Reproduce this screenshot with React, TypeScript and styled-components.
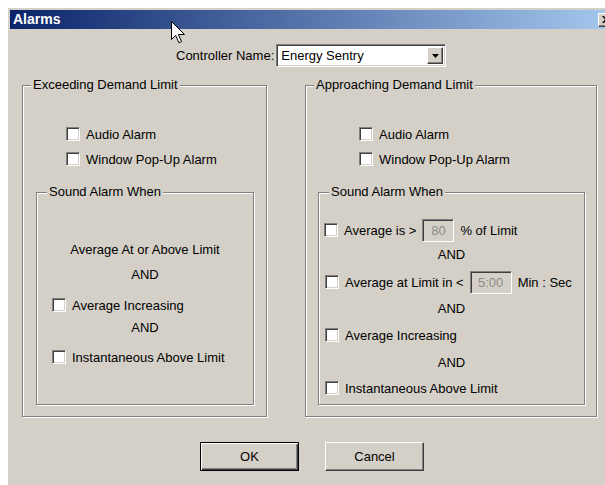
import styled, { createGlobalStyle, css } from "styled-components";

const GlobalStyle = createGlobalStyle`
  body {
    margin: 0;
    background: #fff;
    overflow: hidden;
    font-family: "Liberation Sans", Arial, sans-serif;
    font-size: 13px;
    color: #000;
  }
`;

const face = "#d4d0c8";

const sunken = css`
  box-sizing: border-box;
  border: 1px solid;
  border-color: #808080 #fff #fff #808080;
  box-shadow: inset 1px 1px 0 #404040, inset -1px -1px 0 ${face};
`;

const raised = css`
  box-sizing: border-box;
  border: 1px solid;
  border-color: #fff #404040 #404040 #fff;
  box-shadow: inset -1px -1px 0 #808080;
`;

const Window = styled.div`
  position: relative;
  box-sizing: border-box;
  width: 612px;
  height: 480px;
  margin: 8px 0 0 7px;
  padding: 1px 0 0 2px;
  border-left: 1px solid #fff;
  border-top: 1px solid ${face};
  background: ${face};
`;

const TitleBar = styled.div`
  display: flex;
  align-items: center;
  justify-content: space-between;
  height: 19px;
  padding: 0 5px 0 3px;
  background: linear-gradient(to right, #0a246a, #a6caf0);
`;

const TitleText = styled.span`
  color: #fff;
  font-weight: bold;
  font-size: 14px;
  line-height: 19px;
`;

const CloseButton = styled.div`
  ${raised};
  width: 16px;
  height: 14px;
  background: ${face};
  display: flex;
  align-items: center;
  justify-content: center;
`;

const Body = styled.div`
  padding: 15px 0 0 12px;
`;

const ControllerRow = styled.div`
  display: flex;
  align-items: center;
  margin-left: 154px;
  height: 23px;
`;

const Label = styled.span`
  margin-right: 2px;
  white-space: nowrap;
`;

const Select = styled.div`
  ${sunken};
  width: 170px;
  height: 23px;
  background: #fff;
  display: flex;
  align-items: center;
  justify-content: space-between;
  padding: 2px 2px 2px 4px;
`;

const DropButton = styled.div`
  ${raised};
  width: 16px;
  height: 17px;
  background: ${face};
  display: flex;
  align-items: center;
  justify-content: center;
`;

const GroupsRow = styled.div`
  display: flex;
  gap: 38px;
  margin-top: 18px;
`;

const GroupBox = styled.div<{ $w: number; $h: number; $left?: number; $top?: number }>`
  position: relative;
  box-sizing: border-box;
  width: ${(p) => p.$w}px;
  height: ${(p) => p.$h}px;
  margin-left: ${(p) => p.$left ?? 0}px;
  margin-top: ${(p) => p.$top ?? 0}px;
  border: 1px solid #808080;
  box-shadow: inset 1px 1px 0 #fff, 1px 1px 0 #fff;
  display: flex;
  flex-direction: column;
`;

const Legend = styled.span<{ $indent: number }>`
  position: absolute;
  top: -9px;
  left: ${(p) => p.$indent}px;
  padding: 0 2px;
  line-height: 16px;
  background: ${face};
  white-space: nowrap;
`;

const AlarmList = styled.div<{ $left: number }>`
  display: flex;
  flex-direction: column;
  gap: 11px;
  margin: 41px 0 0 ${(p) => p.$left}px;
`;

const CheckRow = styled.div<{ $top?: number; $left?: number; $tall?: boolean }>`
  display: flex;
  align-items: center;
  height: ${(p) => (p.$tall ? 24 : 14)}px;
  margin-top: ${(p) => p.$top ?? 0}px;
  margin-left: ${(p) => p.$left ?? 0}px;
  white-space: nowrap;
`;

const CheckBox = styled.span`
  ${sunken};
  flex: none;
  width: 14px;
  height: 14px;
  background: #fff;
  margin-right: 6px;
`;

const Caption = styled.div<{ $top: number }>`
  margin-top: ${(p) => p.$top}px;
  line-height: 16px;
  text-align: center;
`;

const SpinField = styled.div<{ $w: number }>`
  ${sunken};
  width: ${(p) => p.$w}px;
  height: 23px;
  margin: 0 6px;
  background: ${face};
  color: #8c8a86;
  display: flex;
  align-items: center;
  justify-content: center;
`;

const ButtonRow = styled.div`
  display: flex;
  gap: 26px;
  margin: 25px 0 0 178px;
`;

const Button = styled.div<{ $default?: boolean }>`
  width: 99px;
  height: 29px;
  display: flex;
  align-items: center;
  justify-content: center;
  background: ${face};
  ${(p) =>
    p.$default
      ? css`
          box-sizing: border-box;
          border: 1px solid #000;
          box-shadow: inset 1px 1px 0 #fff, inset -1px -1px 0 #404040,
            inset -2px -2px 0 #808080;
        `
      : raised};
`;

const Pointer = styled.svg`
  position: absolute;
  left: 163px;
  top: 12px;
`;

function Check({ label, top, left }: { label: string; top?: number; left?: number }) {
  return (
    <CheckRow $top={top} $left={left}>
      <CheckBox />
      {label}
    </CheckRow>
  );
}

export default function App() {
  return (
    <>
      <GlobalStyle />
      <Window>
        <TitleBar>
          <TitleText>Alarms</TitleText>
          <CloseButton>
            <svg width="8" height="7" viewBox="0 0 8 7">
              <path d="M0 0h2l2 2.5L6 0h2L5 3.5 8 7H6L4 4.5 2 7H0l3-3.5z" fill="#000" />
            </svg>
          </CloseButton>
        </TitleBar>
        <Body>
          <ControllerRow>
            <Label>Controller Name:</Label>
            <Select>
              <span>Energy Sentry</span>
              <DropButton>
                <svg width="7" height="4" viewBox="0 0 7 4">
                  <path d="M0 0h7L3.5 4z" fill="#000" />
                </svg>
              </DropButton>
            </Select>
          </ControllerRow>

          <GroupsRow>
            <GroupBox $w={245} $h={332}>
              <Legend $indent={8}>Exceeding Demand Limit</Legend>
              <AlarmList $left={43}>
                <Check label="Audio Alarm" />
                <Check label="Window Pop-Up Alarm" />
              </AlarmList>
              <GroupBox $w={218} $h={213} $left={13} $top={26}>
                <Legend $indent={10}>Sound Alarm When</Legend>
                <Caption $top={49}>Average At or Above Limit</Caption>
                <Caption $top={9}>AND</Caption>
                <Check label="Average Increasing" top={15} left={15} />
                <Caption $top={8}>AND</Caption>
                <Check label="Instantaneous Above Limit" top={14} left={15} />
              </GroupBox>
            </GroupBox>

            <GroupBox $w={292} $h={332}>
              <Legend $indent={8}>Approaching Demand Limit</Legend>
              <AlarmList $left={53}>
                <Check label="Audio Alarm" />
                <Check label="Window Pop-Up Alarm" />
              </AlarmList>
              <GroupBox $w={267} $h={213} $left={12} $top={26}>
                <Legend $indent={10}>Sound Alarm When</Legend>
                <CheckRow $tall $top={25} $left={5}>
                  <CheckBox />
                  Average is &gt;
                  <SpinField $w={32}>80</SpinField>% of Limit
                </CheckRow>
                <Caption $top={5}>AND</Caption>
                <CheckRow $tall $top={7} $left={6}>
                  <CheckBox />
                  Average at Limit in &lt;
                  <SpinField $w={42}>5:00</SpinField>Min : Sec
                </CheckRow>
                <Caption $top={7}>AND</Caption>
                <Check label="Average Increasing" top={11} left={6} />
                <Caption $top={13}>AND</Caption>
                <Check label="Instantaneous Above Limit" top={10} left={6} />
              </GroupBox>
            </GroupBox>
          </GroupsRow>

          <ButtonRow>
            <Button $default>OK</Button>
            <Button>Cancel</Button>
          </ButtonRow>
        </Body>

        <Pointer width="14" height="23" viewBox="0 0 14 23">
          <path
            d="M0.5 0.5v18l4.2-4.2 3.2 7.4 2.6-1.1-3.1-7.1h6.1z"
            fill="#fff"
            stroke="#000"
            strokeWidth="1"
            strokeLinejoin="miter"
          />
        </Pointer>
      </Window>
    </>
  );
}
